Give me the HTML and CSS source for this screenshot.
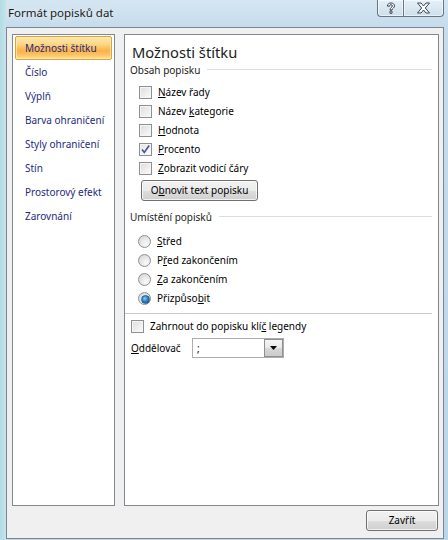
FILE: index.html
```html
<!DOCTYPE html>
<html lang="cs">
<head>
<meta charset="utf-8">
<title>Formát popisků dat</title>
<link rel="stylesheet" href="styles.css">
</head>
<body>
<div class="window">
  <div class="titlebar">
    <div class="title">Formát popisků dat</div>
    <div class="caption-btns">
      <div class="cbtn cbtn-help">
        <svg width="12" height="13" viewBox="0 0 12 13">
          <path d="M2.5 4.2 C2.5 1.8 4 1 6 1 C8.2 1 9.5 2.2 9.5 3.9 C9.5 6 7 6.2 7 8 L5 8 C5 5.6 7.4 5.4 7.4 4 C7.4 3.2 6.9 2.7 6 2.7 C5 2.7 4.6 3.3 4.6 4.2 Z M5 9 L7 9 L7 11.3 L5 11.3 Z" fill="#fff" stroke="#3b4452" stroke-width="1"/>
        </svg>
      </div>
      <div class="cbtn cbtn-close">
        <svg width="15" height="12" viewBox="0 0 15 12">
          <path d="M1.5 1 L5 1 L7.5 4 L10 1 L13.5 1 L9.3 6 L13.5 11 L10 11 L7.5 8 L5 11 L1.5 11 L5.7 6 Z" fill="#fff" stroke="#3b4452" stroke-width="1" stroke-linejoin="round"/>
        </svg>
      </div>
    </div>
  </div>
  <div class="client">
    <div class="main">
      <ul class="nav">
        <li class="nav-item selected">Možnosti štítku</li>
        <li class="nav-item">Číslo</li>
        <li class="nav-item">Výplň</li>
        <li class="nav-item">Barva ohraničení</li>
        <li class="nav-item">Styly ohraničení</li>
        <li class="nav-item">Stín</li>
        <li class="nav-item">Prostorový efekt</li>
        <li class="nav-item">Zarovnání</li>
      </ul>
      <div class="pane">
        <h1 class="heading">Možnosti štítku</h1>
        <div class="group-head"><span>Obsah popisku</span><span class="rule"></span></div>
        <div class="group">
          <div class="row"><span class="check"></span><span class="label"><u>N</u>ázev řady</span></div>
          <div class="row"><span class="check"></span><span class="label">Název <u>k</u>ategorie</span></div>
          <div class="row"><span class="check"></span><span class="label"><u>H</u>odnota</span></div>
          <div class="row"><span class="check checked"><svg width="11" height="11" viewBox="0 0 11 11"><path d="M2 5.5 L4.3 8.5 L9.2 1.5" fill="none" stroke="#3d5a96" stroke-width="1.6"/></svg></span><span class="label"><u>P</u>rocento</span></div>
          <div class="row"><span class="check"></span><span class="label"><u>Z</u>obrazit vodicí čáry</span></div>
          <button class="btn btn-refresh" type="button">O<u>b</u>novit text popisku</button>
        </div>
        <div class="group-head group-head-2"><span>Umístění popisků</span><span class="rule"></span></div>
        <div class="group radios">
          <div class="row"><span class="radio"></span><span class="label"><u>S</u>třed</span></div>
          <div class="row"><span class="radio"></span><span class="label">P<u>ř</u>ed zakončením</span></div>
          <div class="row"><span class="radio"></span><span class="label"><u>Z</u>a zakončením</span></div>
          <div class="row"><span class="radio on"></span><span class="label">Přizpůso<u>b</u>it</span></div>
        </div>
        <div class="separator"></div>
        <div class="row row-flat"><span class="check"></span><span class="label">Zahrnout do popisku klí<u>č</u> legendy</span></div>
        <div class="sep-row">
          <span class="sep-label"><u>O</u>ddělovač</span>
          <div class="combo">
            <span class="combo-text">;</span>
            <span class="combo-btn"><svg width="7" height="4" viewBox="0 0 7 4"><path d="M0 0 L7 0 L3.5 4 Z" fill="#000"/></svg></span>
          </div>
        </div>
      </div>
    </div>
    <div class="footer">
      <button class="btn btn-close" type="button">Zavřít</button>
    </div>
  </div>
</div>
</body>
</html>
```

FILE: styles.css
```css
* { box-sizing: border-box; }

html, body {
  margin: 0;
  padding: 0;
}

body {
  width: 448px;
  height: 540px;
  overflow: hidden;
  font-family: "Noto Sans", "Open Sans", sans-serif;
  font-size: 10px;
  color: #000;
}

.window {
  width: 448px;
  height: 540px;
  background:
    linear-gradient(to right, #b4dbe5 0px, #c5e3ea 6px, rgba(200,224,238,0) 6px),
    linear-gradient(to bottom, #d5e6f2 0px, #c6dcec 26px, #bcd6e7 100%);
  display: flex;
  flex-direction: column;
}

.titlebar {
  height: 27px;
  display: flex;
  justify-content: space-between;
  align-items: flex-start;
  padding-left: 8px;
  padding-right: 4px;
}

.title {
  font-size: 11.5px;
  line-height: 16px;
  margin-top: 5px;
  color: #1b1b1b;
  text-shadow: 0 0 6px rgba(255,255,255,0.9);
}

.caption-btns {
  display: flex;
  height: 17px;
}

.cbtn {
  height: 17px;
  display: flex;
  align-items: center;
  justify-content: center;
  border: 1px solid #6b7483;
  border-top: none;
  background: linear-gradient(to bottom, rgba(235,244,250,0.7), rgba(205,222,235,0.55));
  box-shadow: inset 0 0 0 1px rgba(255,255,255,0.55);
}

.cbtn-help {
  width: 26px;
  border-right: none;
  border-bottom-left-radius: 4px;
}

.cbtn-close {
  width: 41px;
  border-bottom-right-radius: 4px;
}

.client {
  margin: 0 4px 1px 6px;
  height: 513px;
  border: 1px solid #7a8693;
  background: #f0f0f0;
  display: flex;
  flex-direction: column;
}

.main {
  display: flex;
  gap: 9px;
  padding: 6px 4px 0 5px;
  height: 478px;
}

.nav {
  list-style: none;
  margin: 0;
  width: 103px;
  height: 472px;
  padding: 1px 2px;
  background: #fff;
  border: 1px solid #828790;
}

.nav-item {
  height: 24px;
  line-height: 22px;
  padding-left: 9px;
  border: 1px solid transparent;
  color: #1e2a7c;
  white-space: nowrap;
}

.nav-item.selected {
  border-color: #e0a03c;
  border-radius: 2px;
  background: linear-gradient(to bottom, #fde8ab 0%, #fdd98b 30%, #fbb24a 62%, #fcc461 82%, #fde39a 100%);
  box-shadow: inset 0 0 0 1px rgba(255,236,190,0.7);
}

.pane {
  flex: 1;
  height: 472px;
  background: #fff;
  border: 1px solid #828790;
  padding: 7px 6px 0 5px;
}

.heading {
  margin: 0;
  padding-left: 2px;
  font-size: 14.7px;
  font-weight: normal;
  line-height: 20px;
  color: #1b1b1b;
}

.group-head {
  display: flex;
  align-items: center;
  gap: 7px;
  line-height: 16px;
  color: #1b1b1b;
}

.group-head-2 {
  margin-top: 8px;
}

.rule {
  flex: 1;
  height: 1px;
  background: #d5dfe5;
}

.group {
  padding-left: 9px;
  margin-top: 5px;
}

.radios {
  margin-top: 7px;
  padding-left: 8px;
}

.row {
  height: 19px;
  display: flex;
  align-items: center;
  gap: 6px;
}

.label {
  line-height: 16px;
  white-space: nowrap;
}

.check {
  width: 13px;
  height: 13px;
  flex: none;
  border: 1px solid #8e8f8f;
  background: linear-gradient(135deg, #dcdcdc 0%, #ececec 50%, #fbfbfb 100%);
  box-shadow: inset 0 0 0 1px #f5f5f5;
  display: flex;
  align-items: center;
  justify-content: center;
}

.check.checked {
  background: linear-gradient(135deg, #e4e4e4 0%, #f4f4f4 60%, #ffffff 100%);
}

.radio {
  width: 13px;
  height: 13px;
  flex: none;
  border-radius: 50%;
  border: 1px solid #8e8f8f;
  background: radial-gradient(circle at 65% 70%, #fafafa 0%, #e6e6e6 50%, #cfcfcf 100%);
  position: relative;
}

.radio.on::after {
  content: "";
  position: absolute;
  left: 2px;
  top: 2px;
  width: 7px;
  height: 7px;
  border-radius: 50%;
  background: radial-gradient(circle at 40% 35%, #8fd1f7 0%, #2a86c8 45%, #0e4a86 100%);
  border: 1px solid #2c5d8f;
}

.btn {
  font-family: inherit;
  font-size: 10px;
  color: #000;
  border: 1px solid #707070;
  border-radius: 3px;
  background: linear-gradient(to bottom, #f2f2f2 0%, #ebebeb 50%, #dddddd 51%, #cfcfcf 100%);
  box-shadow: inset 0 0 0 1px rgba(255,255,255,0.7);
  padding: 0;
  line-height: 18px;
}

.btn-refresh {
  display: block;
  width: 117px;
  height: 21px;
  margin-top: 2px;
  margin-left: 2px;
}

.separator {
  height: 1px;
  background: #c8c8c8;
  margin: 5px 0 3px -5px;
}

.row-flat {
  padding-left: 1px;
}

.sep-row {
  display: flex;
  align-items: center;
  margin-top: 2px;
  padding-left: 1px;
}

.sep-label {
  width: 61px;
  line-height: 16px;
}

.combo {
  width: 92px;
  height: 20px;
  border: 1px solid #abadb3;
  background: #fff;
  display: flex;
  align-items: center;
  justify-content: space-between;
}

.combo-text {
  padding-left: 4px;
  line-height: 16px;
}

.combo-btn {
  width: 19px;
  height: 18px;
  border: 1px solid #8e8f8f;
  background: linear-gradient(to bottom, #f4f4f4 0%, #e8e8e8 50%, #d8d8d8 51%, #cbcbcb 100%);
  display: flex;
  align-items: center;
  justify-content: center;
}

.footer {
  display: flex;
  justify-content: flex-end;
  padding: 4px 5px 0 0;
}

.btn-close {
  width: 72px;
  height: 21px;
}
```
